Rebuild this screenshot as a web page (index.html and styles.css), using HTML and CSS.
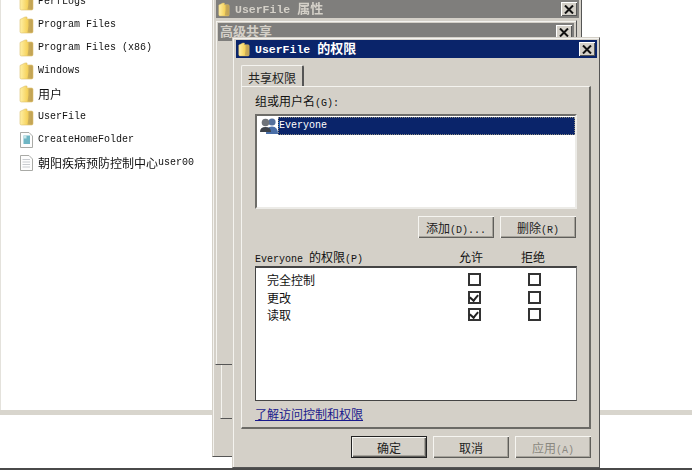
FILE: index.html
```html
<!DOCTYPE html>
<html lang="zh-CN">
<head>
    <meta charset="UTF-8">
    <title>UserFile 的权限</title>
    <link rel="stylesheet" href="styles.css">
</head>
<body>
    <svg class="defs" width="0" height="0">
        <defs>
            <linearGradient id="folderFill" x1="0" y1="0" x2="1" y2="0">
                <stop offset="0" stop-color="#fff0a6"/>
                <stop offset="0.55" stop-color="#f6d35e"/>
                <stop offset="1" stop-color="#d2ae52"/>
            </linearGradient>
            <symbol id="folder" viewBox="0 0 15 18">
                <path d="M1 3.500 L6 1 L8 1 L8 3 L12.500 3 Q14 3 14 4.500 L14 15.500 Q14 17 12.500 17 L2.500 17 Q1 17 1 15.500 Z" fill="url(#folderFill)" stroke="#dcc06e" stroke-width="0.6"/>
                <path d="M9.500 3.500 L13.500 3.500 L13.500 16.500 L8.500 16.500 Q10 10 9.500 3.500 Z" fill="#a98f55" opacity="0.5"/>
            </symbol>
            <symbol id="doc" viewBox="0 0 15 17">
                <path d="M1.500 1 L10 1 L13.500 4.500 L13.500 16 L1.500 16 Z" fill="#fdfdfd" stroke="#a9aaa6"/>
                <path d="M3.500 5 H11 M3.500 7.500 H11 M3.500 10 H11 M3.500 12.500 H11" stroke="#c9ccd0"/>
            </symbol>
            <symbol id="script" viewBox="0 0 15 17">
                <path d="M1.500 1 L10 1 L13.500 4.500 L13.500 16 L1.500 16 Z" fill="#fdfdfd" stroke="#a9aaa6"/>
                <rect x="4.500" y="4" width="6.500" height="8.500" fill="#6fb6c4"/>
                <rect x="4.500" y="4" width="3" height="3" fill="#c7e6ea"/>
            </symbol>
            <symbol id="cross" viewBox="0 0 10 9">
                <path d="M1 0.500 L9 8.500 M9 0.500 L1 8.500" stroke="#111" stroke-width="2" fill="none"/>
            </symbol>
        </defs>
    </svg>

    <div class="screen">
        <div class="explorer">
            <ul class="files">
                <li><svg class="file-icon"><use href="#folder"/></svg>PerfLogs</li>
                <li><svg class="file-icon"><use href="#folder"/></svg>Program Files</li>
                <li><svg class="file-icon"><use href="#folder"/></svg>Program Files (x86)</li>
                <li><svg class="file-icon"><use href="#folder"/></svg>Windows</li>
                <li><svg class="file-icon"><use href="#folder"/></svg><span class="cjk">用户</span></li>
                <li><svg class="file-icon"><use href="#folder"/></svg>UserFile</li>
                <li><svg class="file-icon"><use href="#script"/></svg>CreateHomeFolder</li>
                <li><svg class="file-icon"><use href="#doc"/></svg><span class="cjk">朝阳疾病预防控制中心</span>user00</li>
            </ul>
        </div>
        <div class="band"></div>

        <div class="window props">
            <div class="titlebar inactive">
                <svg class="title-icon"><use href="#folder"/></svg>
                <span class="title-text">UserFile <span class="cjk">属性</span></span>
                <span class="close"><svg class="cross"><use href="#cross"/></svg></span>
            </div>
        </div>
        <div class="window props-panel"></div>

        <div class="window advanced">
            <div class="titlebar inactive">
                <span class="title-text cjk">高级共享</span>
                <span class="close"><svg class="cross"><use href="#cross"/></svg></span>
            </div>
        </div>

        <div class="window perms">
            <div class="titlebar">
                <svg class="title-icon"><use href="#folder"/></svg>
                <span class="title-text">UserFile <span class="cjk">的权限</span></span>
                <span class="close"><svg class="cross"><use href="#cross"/></svg></span>
            </div>
            <div class="dialog-body">
                <div class="tabs"><span class="tab cjk">共享权限</span></div>
                <div class="tab-panel">
                    <div class="field-label"><span class="cjk">组或用户名</span>(G):</div>
                    <div class="listbox">
                        <div class="list-row">
                            <svg class="user-icon" viewBox="0 0 18 18">
                                <circle cx="12" cy="5" r="3.600" fill="#54709c"/>
                                <path d="M6 17 Q6 9.500 12 9.500 Q18 9.500 18 17 Z" fill="#4a6fa8"/>
                                <circle cx="5.500" cy="5.500" r="3.800" fill="#6f7379"/>
                                <path d="M0 15 Q0 10 5.500 10 Q11 10 11 15 Z" fill="#3d424a"/>
                            </svg>
                            <span class="list-name">Everyone</span>
                        </div>
                    </div>
                    <div class="list-buttons">
                        <button class="btn"><span class="cjk">添加</span>(D)...</button>
                        <button class="btn"><span class="cjk">删除</span>(R)</button>
                    </div>
                    <div class="perm-head">
                        <span class="perm-name">Everyone <span class="cjk">的权限</span>(P)</span>
                        <span class="perm-col cjk">允许</span>
                        <span class="perm-col cjk">拒绝</span>
                    </div>
                    <div class="perm-box">
                        <div class="perm-row">
                            <span class="perm-name cjk">完全控制</span>
                            <span class="perm-col"><span class="check"></span></span>
                            <span class="perm-col"><span class="check"></span></span>
                        </div>
                        <div class="perm-row">
                            <span class="perm-name cjk">更改</span>
                            <span class="perm-col"><span class="check on"></span></span>
                            <span class="perm-col"><span class="check"></span></span>
                        </div>
                        <div class="perm-row">
                            <span class="perm-name cjk">读取</span>
                            <span class="perm-col"><span class="check on"></span></span>
                            <span class="perm-col"><span class="check"></span></span>
                        </div>
                    </div>
                    <a class="help-link cjk" href="#">了解访问控制和权限</a>
                </div>
                <div class="dialog-buttons">
                    <button class="btn default"><span class="cjk">确定</span></button>
                    <button class="btn"><span class="cjk">取消</span></button>
                    <button class="btn disabled"><span class="cjk">应用</span>(A)</button>
                </div>
            </div>
        </div>
    </div>
</body>
</html>
```

FILE: styles.css
```css
* {
    box-sizing: border-box;
}
body {
    margin: 0;
    background-color: white;
    font-family: "Liberation Mono", "Noto Sans CJK SC", monospace;
    font-size: 10px;
    color: #111;
}
.defs {
    position: absolute;
}
.cjk {
    font-family: "Noto Sans CJK SC", sans-serif;
    font-size: 12px;
}
.screen {
    position: relative;
    width: 692px;
    height: 470px;
    overflow: hidden;
    border-bottom: 2px solid #4a4a4a;
    filter: blur(0.35px);
}

/* explorer behind the dialogs */
.explorer {
    height: 410px;
    overflow: hidden;
    border-left: 1px solid #e4e2dc;
}
.files {
    list-style: none;
    margin: -10px 0 0;
    padding: 0 0 0 18px;
}
.files li {
    display: flex;
    align-items: center;
    height: 23px;
    white-space: nowrap;
}
.file-icon {
    width: 15px;
    height: 18px;
    margin-right: 4px;
}
.band {
    height: 5px;
    background-color: #d8d5cd;
}

/* windows */
.window {
    position: absolute;
    background-color: #d4d0c8;
    border: 1px solid #d4d0c8;
    border-right-color: #555;
    border-bottom-color: #555;
    box-shadow: inset 1px 1px 0 #f4f3ef;
}
.props {
    left: 212px;
    top: -3px;
    width: 370px;
    height: 460px;
    padding: 2px 2px 0 3px;
}
.props-panel {
    left: 220px;
    top: 40px;
    width: 355px;
    height: 379px;
}
.advanced {
    left: 215px;
    top: 20px;
    width: 362px;
    height: 345px;
    padding: 2px 2px 0 2px;
}
.perms {
    left: 232px;
    top: 37px;
    width: 368px;
    height: 431px;
    padding: 2px 2px 0 3px;
}
.titlebar {
    display: flex;
    align-items: center;
    height: 18px;
    padding: 0 2px 0 2px;
    background-color: #0a246a;
    color: white;
    font-weight: bold;
    font-size: 11.500px;
}
.titlebar .cjk {
    font-size: 13px;
}
.titlebar.inactive {
    background-color: #7f7e7c;
    color: #d4d0c8;
}
.title-icon {
    width: 12px;
    height: 15px;
    margin-right: 5px;
}
.title-text {
    flex: 1;
    padding-bottom: 3px;
    white-space: nowrap;
}
.close {
    display: flex;
    align-items: center;
    justify-content: center;
    width: 16px;
    height: 14px;
    background-color: #d4d0c8;
    box-shadow: inset 1px 1px 0 #fff, inset -1px -1px 0 #555;
}
.cross {
    width: 10px;
    height: 9px;
}

/* dialog contents */
.dialog-body {
    padding: 7px 6px 0 5px;
}
.tabs {
    display: flex;
    height: 21px;
}
.tab {
    width: 63px;
    padding-top: 3px;
    text-align: center;
    background-color: #d4d0c8;
    border: 1px solid #f4f3ef;
    border-right: 2px solid #555;
    border-bottom: none;
    border-radius: 2px 2px 0 0;
    color: #222;
}
.tab-panel {
    height: 343px;
    padding: 6px 12px 0 13px;
    border: 1px solid #f4f3ef;
    border-right: 2px solid #6b6a66;
    border-bottom: 2px solid #6b6a66;
}
.field-label {
    height: 21px;
    line-height: 16px;
}
.listbox {
    height: 95px;
    padding: 1px 0 0 1px;
    background-color: white;
    border: 2px solid #6e6d69;
    border-right-color: #ecebe7;
    border-bottom-color: #ecebe7;
}
.list-row {
    display: flex;
    align-items: center;
    height: 18px;
    padding-left: 2px;
}
.user-icon {
    width: 18px;
    height: 18px;
    flex: none;
}
.list-name {
    flex: 1;
    height: 18px;
    line-height: 17px;
    padding-left: 1px;
    background-color: #0a246a;
    color: white;
    outline: 1px dotted #8a8a80;
    outline-offset: -1px;
}
.list-buttons {
    display: flex;
    justify-content: flex-end;
    gap: 6px;
    margin: 7px 1px 0 0;
}
.btn {
    width: 76px;
    height: 22px;
    padding: 0;
    background-color: #d4d0c8;
    border: none;
    box-shadow: inset 1px 1px 0 #f6f5f1, inset -1px -1px 0 #5f5e5a, inset -2px -2px 0 #a5a29a;
    font-family: inherit;
    font-size: 10px;
    color: #222;
}
.btn.default {
    border: 1px solid #222;
}
.btn.disabled {
    color: #8a8880;
}
.perm-head {
    display: flex;
    align-items: center;
    height: 20px;
    margin-top: 8px;
    padding-right: 14px;
}
.perm-name {
    flex: 1;
}
.perm-col {
    display: flex;
    justify-content: center;
    width: 60px;
}
.perm-head .perm-col:nth-child(2) {
    margin-right: 2px;
}
.perm-box {
    height: 135px;
    padding: 3px 12px 0 11px;
    background-color: white;
    border: 1px solid #444;
    border-top-width: 2px;
    border-right-color: #777;
}
.perm-row {
    display: flex;
    align-items: center;
    height: 17.500px;
}
.check {
    position: relative;
    width: 13px;
    height: 13px;
    background-color: white;
    border: 2px solid #333;
}
.check.on::after {
    content: "";
    position: absolute;
    left: 1.500px;
    top: 0;
    width: 4px;
    height: 6px;
    border-right: 2px solid #222;
    border-bottom: 2px solid #222;
    transform: rotate(40deg);
}
.help-link {
    display: block;
    margin-top: 4px;
    color: #1a1a8c;
}
.dialog-buttons {
    display: flex;
    justify-content: flex-end;
    gap: 6px;
    margin: 7px 0 0;
}
```
